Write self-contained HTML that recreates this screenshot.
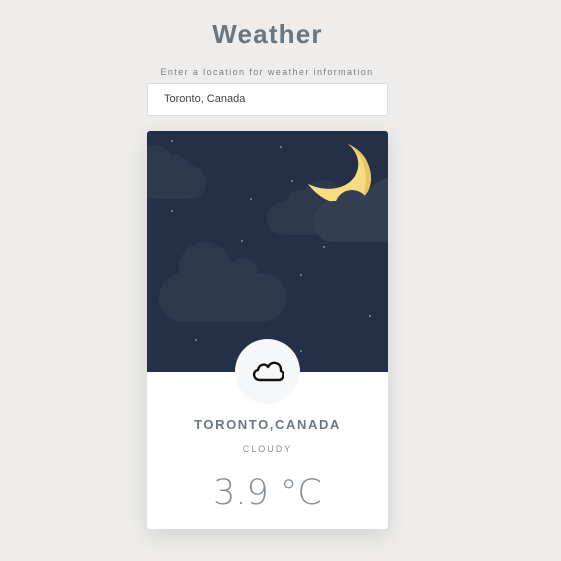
<!DOCTYPE html>
<html><head><style>
body{margin:0;width:561px;height:561px;background:#eeedeb;font-family:"Liberation Sans",sans-serif;position:relative;overflow:hidden}
h1{position:absolute;top:19px;left:147px;width:241px;text-align:center;margin:0;font-size:26px;font-weight:bold;color:#6b757e;letter-spacing:1.2px}
.lab{position:absolute;top:67px;left:117px;width:300px;text-align:center;font-size:9px;letter-spacing:1.4px;color:#7a7f84}
.inp{position:absolute;left:147px;top:83px;background:#fff;border:1px solid #dcdcdc;border-radius:3px;font-size:11px;color:#444;line-height:31px;box-sizing:border-box;padding-left:16px;height:33px;width:241px}
.card{position:absolute;left:147px;top:131px;width:241px;height:398px;background:#fff;border-radius:3px;box-shadow:0 6px 20px rgba(0,0,0,.12);overflow:hidden}
.sky{position:absolute;left:0;top:0;width:241px;height:241px;background:#243047}
.circ{position:absolute;left:235px;top:339px;width:65px;height:65px;border-radius:50%;background:#f6f7f9}
.t{position:absolute;left:147px;width:241px;text-align:center;color:#6c7783}
</style></head><body>
<h1>Weather</h1>
<div class="lab">Enter a location for weather information</div>
<div class="inp">Toronto, Canada</div>
<div class="card"><div class="sky">
<svg width="241" height="241" style="position:absolute;left:0;top:0">
<g fill="#2d384c">
<rect x="-10" y="35" width="69" height="33" rx="16"/><circle cx="6" cy="36" r="22"/><circle cx="28" cy="40" r="16"/>
<rect x="12" y="142" width="127" height="49" rx="24"/><circle cx="58" cy="137" r="26"/><circle cx="95" cy="143" r="16"/>
<rect x="120" y="71" width="100" height="33" rx="16"/><circle cx="176" cy="72" r="23"/><circle cx="152" cy="72" r="13"/>
</g>
<path d="M201 13 C230 25 232 65 200 72 C185 75 170 65 161 53 C180 62 200 58 208 45 C214 35 212 22 201 13Z" fill="#f7dc84"/>
<path d="M201 13 C228 26 230 58 214 68 C222 52 222 30 201 13Z" fill="#e9c660"/>
<g fill="#333e52"><rect x="166" y="70" width="100" height="41" rx="20"/><circle cx="205" cy="76" r="17"/><circle cx="245" cy="75" r="28"/></g>
<g fill="#8a8f9a"><circle cx="25" cy="10" r="1"/><circle cx="134" cy="16" r="1"/><circle cx="145" cy="50" r="1"/><circle cx="104" cy="68" r="1"/><circle cx="25" cy="80" r="1"/><circle cx="95" cy="110" r="1"/><circle cx="177" cy="116" r="1"/><circle cx="154" cy="144" r="1"/><circle cx="223" cy="185" r="1"/><circle cx="49" cy="209" r="1"/><circle cx="154" cy="220" r="1"/></g>
</svg></div></div>
<div class="circ"></div>
<svg width="34" height="26" style="position:absolute;left:250px;top:359px"><path d="M10 21 C3 21 2 12 8 11 C9 5 16 4 18 8 C21 1 32 3 31 12 C35 13 34 21 29 21Z" fill="none" stroke="#111" stroke-width="2.4" stroke-linejoin="round"/></svg>
<div class="t" style="top:417px;font-size:13px;font-weight:bold;letter-spacing:1.6px">TORONTO,CANADA</div>
<div class="t" style="top:444px;font-size:9px;letter-spacing:2px;color:#8a8f96">CLOUDY</div>
<div class="t" style="top:473px;font-size:35px;color:#858d96;font-family:'DejaVu Sans',sans-serif;font-weight:200;letter-spacing:0px">3.9 °C</div>
</body></html>
